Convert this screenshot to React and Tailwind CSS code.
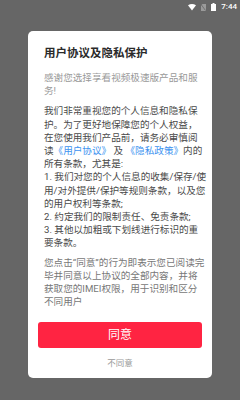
const link = 'text-[#3d93f0]'

export default function App() {
  return (
    <div className="w-[240px] h-[400px] bg-[#666666] flex flex-col overflow-hidden" style={{ fontFamily: 'Roboto, "Noto Sans CJK SC", sans-serif' }}>
      {/* status bar */}
      <div className="h-[13px] flex items-center justify-end gap-[5px] pr-[3px] pt-[1px]">
        <svg width="8" height="7" viewBox="0 0 8 7">
          <path d="M0 1.2 Q4 -1 8 1.2 L4 6.5 Z" fill="#fff" />
        </svg>
        <svg width="5" height="7" viewBox="0 0 5 7">
          <path d="M1.5 0 H5 V7 H0 V1.5 Z" fill="#9a9a9a" />
          <path d="M0.5 1 L4.5 6.5" stroke="#666" strokeWidth="0.8" />
        </svg>
        <svg width="5" height="8" viewBox="0 0 5 8">
          <rect x="1.5" y="0" width="2" height="1" fill="#fff" />
          <rect x="0" y="1" width="5" height="7" fill="#fff" />
        </svg>
        <span className="text-[8px] leading-[10px] text-white font-medium">7:44</span>
      </div>

      <div className="mt-[18px] mx-[28px] bg-white rounded-[5px] px-4 pt-[15px] pb-[9px]">
        <h1 className="text-[11.5px] leading-[14px] font-bold text-[#2a2a2a]">用户协议及隐私保护</h1>
        <p className="mt-[11px] whitespace-nowrap text-[9.6px] leading-[13.2px] text-[#999]">
          感谢您选择享看视频极速版产品和服<br />务!
        </p>
        <div className="mt-[7px] whitespace-nowrap text-[9.6px] leading-[13.2px] text-[#4a4a4a]">
          <p>
            我们非常重视您的个人信息和隐私保<br />
            护。为了更好地保障您的个人权益，<br />
            在您使用我们产品前，请务必审慎阅<br />
            读<span className={link}>《用户协议》</span> 及 <span className={link}>《隐私政策》</span>内的<br />
            所有条款，尤其是:
          </p>
          <p>1. 我们对您的个人信息的收集/保存/使<br />用/对外提供/保护等规则条款，以及您<br />的用户权利等条款;</p>
          <p>2. 约定我们的限制责任、免责条款;</p>
          <p>3. 其他以加粗或下划线进行标识的重<br />要条款。</p>
        </div>
        <p className="mt-[6px] whitespace-nowrap text-[9.6px] leading-[13.2px] text-[#777]">
          您点击“同意”的行为即表示您已阅读完<br />毕并同意以上协议的全部内容，并将<br />获取您的IMEI权限，用于识别和区分<br />不同用户
        </p>
        <button className="mt-[14px] -mx-[6px] w-[164px] h-[26px] rounded-[3px] bg-[#ff2442] text-white text-[12px] flex items-center justify-center">
          同意
        </button>
        <div className="mt-[9px] text-center text-[8.5px] leading-[12px] text-[#999]">不同意</div>
      </div>
    </div>
  )
}
